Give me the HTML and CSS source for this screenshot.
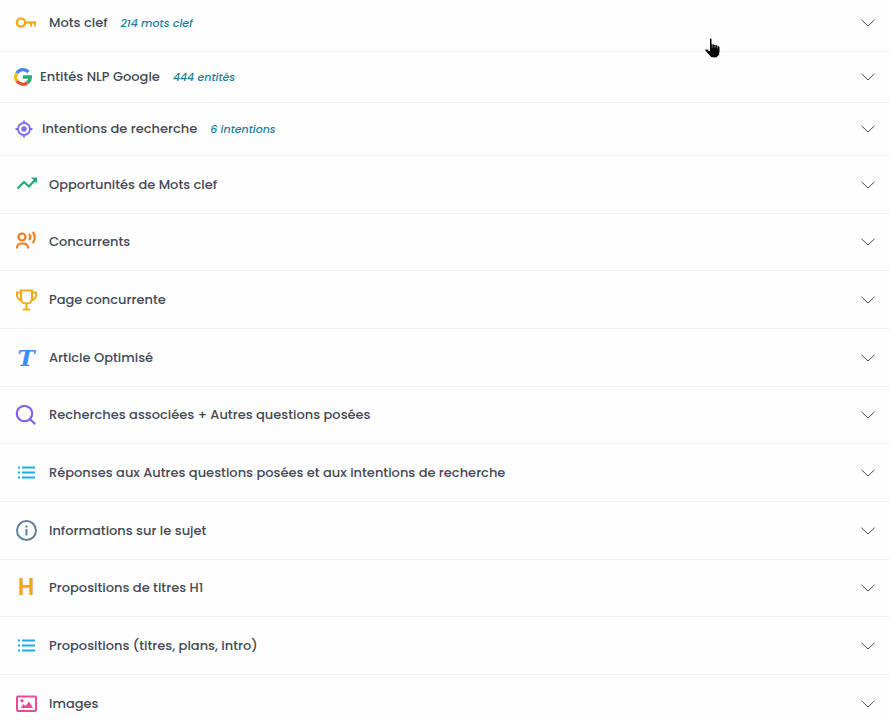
FILE: index.html
```html
<!DOCTYPE html>
<html lang="fr">
<head>
    <meta charset="UTF-8">
    <meta name="viewport" content="width=device-width, initial-scale=1.0">
    <title>Analyse du mot clef</title>
    <link rel="stylesheet" href="styles.css">
</head>
<body>
    <!-- Formes partagées -->
    <svg class="sprite" aria-hidden="true">
        <symbol id="chevron" viewBox="0 0 14 8">
            <path d="M.5 .8 7 7 13.5 .8" fill="none" stroke="currentColor"/>
        </symbol>
        <symbol id="list" viewBox="0 0 26 26">
            <path d="M9 7.500h13M9 12.500h13M9 17.500h13M5 7.500h2M5 12.500h2M5 17.500h2" stroke="currentColor" stroke-width="2.2"/>
        </symbol>
    </svg>

    <main class="accordion">
        <button type="button" class="item item-first">
            <svg class="icon yellow" viewBox="0 0 26 26" fill="none" stroke="currentColor">
                <circle cx="8" cy="12.5" r="4.1" stroke-width="2.3"/>
                <path d="M12 12.5h11" stroke-width="2.3"/>
                <path d="M18 13v3.500M21.8 13v3.500" stroke-width="2"/>
            </svg>
            <span class="title">Mots clef</span>
            <em class="count">214 mots clef</em>
            <svg class="chevron"><use href="#chevron"/></svg>
        </button>
        <button type="button" class="item item-google">
            <svg class="icon" viewBox="0 0 48 48" fill="none" stroke-width="8">
                <path stroke="#4285f4" d="M9.3 14.500A17.500 17.500 0 0 1 37 12"/>
                <path stroke="#fbbc05" d="M9.3 33.500a17.500 17.500 0 0 1 0-19"/>
                <path stroke="#e5533f" d="M35 37.600A17.500 17.500 0 0 1 9.300 33.500"/>
                <path stroke="#2bab7a" d="M24 24h17.500A17.500 17.500 0 0 1 35 37.600"/>
            </svg>
            <span class="title">Entités NLP Google</span>
            <em class="count">444 entités</em>
            <svg class="chevron"><use href="#chevron"/></svg>
        </button>
        <button type="button" class="item item-target">
            <svg class="icon indigo" viewBox="0 0 22 22" fill="none" stroke="currentColor" stroke-width="1.8">
                <circle cx="11" cy="11" r="6"/>
                <circle cx="11" cy="11" r="2.7" fill="currentColor" stroke="none"/>
                <path d="M11 2.500V5M11 17v2.500M2.500 11H5M17 11h2.500"/>
            </svg>
            <span class="title">Intentions de recherche</span>
            <em class="count">6 intentions</em>
            <svg class="chevron"><use href="#chevron"/></svg>
        </button>
        <button type="button" class="item">
            <svg class="icon green" viewBox="0 0 26 26" fill="none" stroke="currentColor" stroke-width="2.3">
                <path d="M4.500 16.500 11 10l5 4.500 6-6.500"/>
                <path d="M18 5.500h6v6z" fill="currentColor" stroke="none"/>
            </svg>
            <span class="title">Opportunités de Mots clef</span>
            <svg class="chevron"><use href="#chevron"/></svg>
        </button>
        <button type="button" class="item">
            <svg class="icon orange" viewBox="0 0 26 26" fill="none" stroke="currentColor" stroke-width="2.2">
                <circle cx="9" cy="8" r="3.5"/>
                <path d="M4 19.500v-1a5 4 0 0 1 5-4h1a5 4 0 0 1 5 4v1"/>
                <path d="M16 5q2.800 3 0 6M19.8 3q4 5.500 0 11"/>
            </svg>
            <span class="title">Concurrents</span>
            <svg class="chevron"><use href="#chevron"/></svg>
        </button>
        <button type="button" class="item">
            <svg class="icon yellow" viewBox="0 0 26 26" fill="none" stroke="currentColor" stroke-width="2">
                <path d="M8 3.500h11V11q0 5.500-5.500 5.500T8 11zM8 5.500H4V8q0 4.500 5 5.500M19 5.500h4V8q0 4.500-5 5.500M13.500 16.500V22M10 22.500h7"/>
            </svg>
            <span class="title">Page concurrente</span>
            <svg class="chevron"><use href="#chevron"/></svg>
        </button>
        <button type="button" class="item">
            <span class="icon letter letter-t" aria-hidden="true">T</span>
            <span class="title">Article Optimisé</span>
            <svg class="chevron"><use href="#chevron"/></svg>
        </button>
        <button type="button" class="item">
            <svg class="icon violet" viewBox="0 0 26 26" fill="none" stroke="currentColor" stroke-width="2.200">
                <circle cx="11.500" cy="11.500" r="7.700"/>
                <path d="m17 17 5.200 5.200"/>
            </svg>
            <span class="title">Recherches associées + Autres questions posées</span>
            <svg class="chevron"><use href="#chevron"/></svg>
        </button>
        <button type="button" class="item">
            <svg class="icon cyan"><use href="#list"/></svg>
            <span class="title">Réponses aux Autres questions posées et aux intentions de recherche</span>
            <svg class="chevron"><use href="#chevron"/></svg>
        </button>
        <button type="button" class="item">
            <svg class="icon slate" viewBox="0 0 26 26" fill="none" stroke="currentColor" stroke-width="2">
                <circle cx="13.500" cy="12.500" r="9.500"/>
                <path d="M13.500 11V17.500M13.500 7.500v2"/>
            </svg>
            <span class="title">Informations sur le sujet</span>
            <svg class="chevron"><use href="#chevron"/></svg>
        </button>
        <button type="button" class="item">
            <span class="icon letter letter-h" aria-hidden="true">H</span>
            <span class="title">Propositions de titres H1</span>
            <svg class="chevron"><use href="#chevron"/></svg>
        </button>
        <button type="button" class="item">
            <svg class="icon cyan"><use href="#list"/></svg>
            <span class="title">Propositions (titres, plans, intro)</span>
            <svg class="chevron"><use href="#chevron"/></svg>
        </button>
        <button type="button" class="item">
            <svg class="icon pink" viewBox="0 0 26 26">
                <rect x="4" y="5.500" width="19" height="14.500" rx="1" fill="none" stroke="currentColor" stroke-width="2"/>
                <path d="m7.500 17 3-4 2 2 3.500-4.500 4 6.500z" fill="currentColor"/>
                <circle cx="9" cy="9.700" r="1.600" fill="currentColor"/>
            </svg>
            <span class="title">Images</span>
            <svg class="chevron"><use href="#chevron"/></svg>
        </button>
    </main>

    <svg class="pointer" viewBox="0 0 18 22" aria-hidden="true">
        <path d="M5.500 12V2.500q0-1.500 1.300-1.500T8 2.500V7q2.500-.6 3 .8 2-.5 2.500.8 2.500-.2 2.500 1.600V15q0 3-2 4.500-1 1.500-4 1.500t-4.500-2L1 13.500q-.6-1.500 1-1.700 1.500 0 3.500 2z" fill="#000" stroke="#fff" stroke-width="1"/>
        <path d="M8.200 7.500V11M11 8.300V11M13.700 9v2.500" stroke="#ccc" stroke-width=".6"/>
    </svg>
</body>
</html>
```
FILE: styles.css
```css
* {
    box-sizing: border-box;
}
body {
    margin: 0;
    background: #fefefe;
    font-family: Poppins, Inter, sans-serif;
    overflow: hidden;
}
.sprite {
    display: none;
}
.accordion {
    display: flex;
    flex-direction: column;
}
.item {
    display: flex;
    align-items: center;
    gap: 10px;
    width: 100%;
    min-height: 58px;
    padding: 0 15px 0 13px;
    border: 0;
    border-bottom: 1px solid #f0f0f5;
    background: none;
    color: #454a56;
    font-family: inherit;
    font-size: 13px;
    font-weight: 500;
    line-height: 20px;
    text-align: left;
    cursor: pointer;
}
.item:nth-child(3n+5) {
    min-height: 57px;
}
.item-first {
    min-height: 52px;
    padding-bottom: 6px;
}
.item-google {
    min-height: 51px;
    gap: 7px;
}
.item-target {
    min-height: 53px;
    gap: 7px;
}
.icon {
    flex: none;
    width: 26px;
    height: 26px;
}
.item-google .icon {
    width: 20px;
    height: 20px;
}
.item-target .icon {
    width: 22px;
    height: 22px;
}
.letter {
    font-weight: 700;
    line-height: 26px;
    text-align: center;
}
.letter-t {
    color: #3f8cf4;
    font-family: "DejaVu Serif", serif;
    font-size: 23px;
    font-style: italic;
}
.letter-h {
    color: #f0ab14;
    font-family: Roboto, sans-serif;
    font-size: 23px;
}
.yellow { color: #f0ab14; }
.indigo { color: #7c6cf2; }
.green { color: #22a97c; }
.orange { color: #f67a1c; }
.violet { color: #8560f0; }
.cyan { color: #1aaee0; }
.slate { color: #64809a; }
.pink { color: #ec4899; }
.count {
    margin-left: 3px;
    color: #1683a3;
    font-size: 11px;
}
.item-google .count,
.item-target .count {
    margin-left: 6px;
}
.chevron {
    flex: none;
    width: 14px;
    height: 8px;
    margin-left: auto;
}
.pointer {
    position: absolute;
    top: 37px;
    left: 704px;
    width: 18px;
    height: 22px;
    pointer-events: none;
}
```
